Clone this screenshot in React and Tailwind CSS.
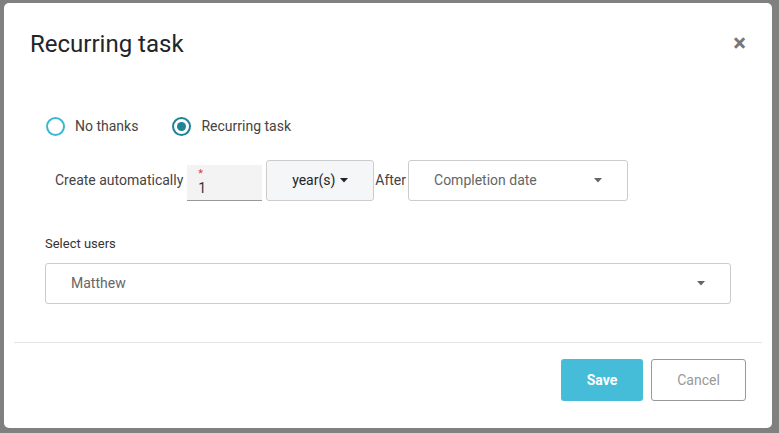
import React, { useState } from 'react';

const font = { fontFamily: 'Roboto, "Liberation Sans", sans-serif' };

function Caret({ className = '' }) {
  return (
    <svg width="8" height="5" viewBox="0 0 8 5" className={className}>
      <path d="M0 0 L8 0 L4 4.5 Z" fill="currentColor" />
    </svg>
  );
}

function Radio({ checked, label, onClick }) {
  return (
    <button type="button" onClick={onClick} className="flex items-center gap-[10px]">
      <span
        className={`w-[19px] h-[19px] rounded-full border-2 flex items-center justify-center ${checked ? 'border-[#1f8299]' : 'border-[#3cb8d0]'}`}
      >
        {checked && <span className="w-[9px] h-[9px] rounded-full bg-[#1f8299]" />}
      </span>
      <span className="text-[14px] text-[#444]">{label}</span>
    </button>
  );
}

export default function App() {
  const [mode, setMode] = useState('recurring');

  return (
    <div className="w-[779px] h-[433px] bg-[#808080] pt-[3px] pl-[4px]" style={font}>
      <div className="w-[768px] h-[425px] bg-white rounded-[5px] flex flex-col">
        {/* Header */}
        <div className="flex items-center justify-between pl-[26px] pr-[26px] pt-[26px]">
          <h2 className="text-[24px] leading-[30px] text-[#212529]">Recurring task</h2>
          <button type="button" className="text-[#777] text-[24px] leading-none font-bold mt-[-2px]">×</button>
        </div>

        {/* Body */}
        <div className="px-[41px] pt-[57px] flex-1">
          <div className="flex items-center gap-[34px] pl-[1px]">
            <Radio checked={mode === 'none'} label="No thanks" onClick={() => setMode('none')} />
            <Radio checked={mode === 'recurring'} label="Recurring task" onClick={() => setMode('recurring')} />
          </div>

          <div className="flex items-center mt-[23px] pl-[10px] text-[14px] text-[#444]">
            <span className="mr-[4px]">Create automatically</span>
            <div className="relative w-[75px] h-[36px] bg-[#f3f3f3] border-b border-[#999] mt-[4px]">
              <span className="absolute left-[11px] top-[1px] text-[#e53935] text-[11px]">*</span>
              <span className="absolute left-[11px] top-[13px] text-[14px] text-[#333]">1</span>
            </div>
            <button
              type="button"
              className="ml-[4px] w-[108px] h-[41px] bg-[#f5f6f8] border border-[#ccc] rounded-[3px] flex items-center justify-center gap-[5px] text-[#212529]"
            >
              year(s)
              <Caret />
            </button>
            <span className="ml-[1px] mr-[2px] text-[#444]">After</span>
            <div className="w-[220px] h-[41px] border border-[#ccc] rounded-[3px] flex items-center justify-between pl-[25px] pr-[25px] text-[#666]">
              <span>Completion date</span>
              <Caret className="text-[#666]" />
            </div>
          </div>

          <div className="mt-[33px] text-[13px] text-[#333]">Select users</div>
          <div className="mt-[9px] w-[686px] h-[41px] border border-[#ccc] rounded-[3px] flex items-center justify-between pl-[25px] pr-[25px] text-[14px] text-[#666]">
            <span>Matthew</span>
            <Caret className="text-[#666]" />
          </div>
        </div>

        {/* Footer */}
        <div className="mx-[10px] border-t border-[#e5e5e5] flex justify-end pt-[16px] pb-[27px] pr-[16px]">
          <button
            type="button"
            className="w-[82px] h-[42px] bg-[#45bcd8] text-white font-bold text-[14px] rounded-[3px] mr-[8px]"
          >
            Save
          </button>
          <button
            type="button"
            className="w-[95px] h-[42px] bg-white border border-[#999] text-[#999] text-[14px] rounded-[3px]"
          >
            Cancel
          </button>
        </div>
      </div>
    </div>
  );
}
